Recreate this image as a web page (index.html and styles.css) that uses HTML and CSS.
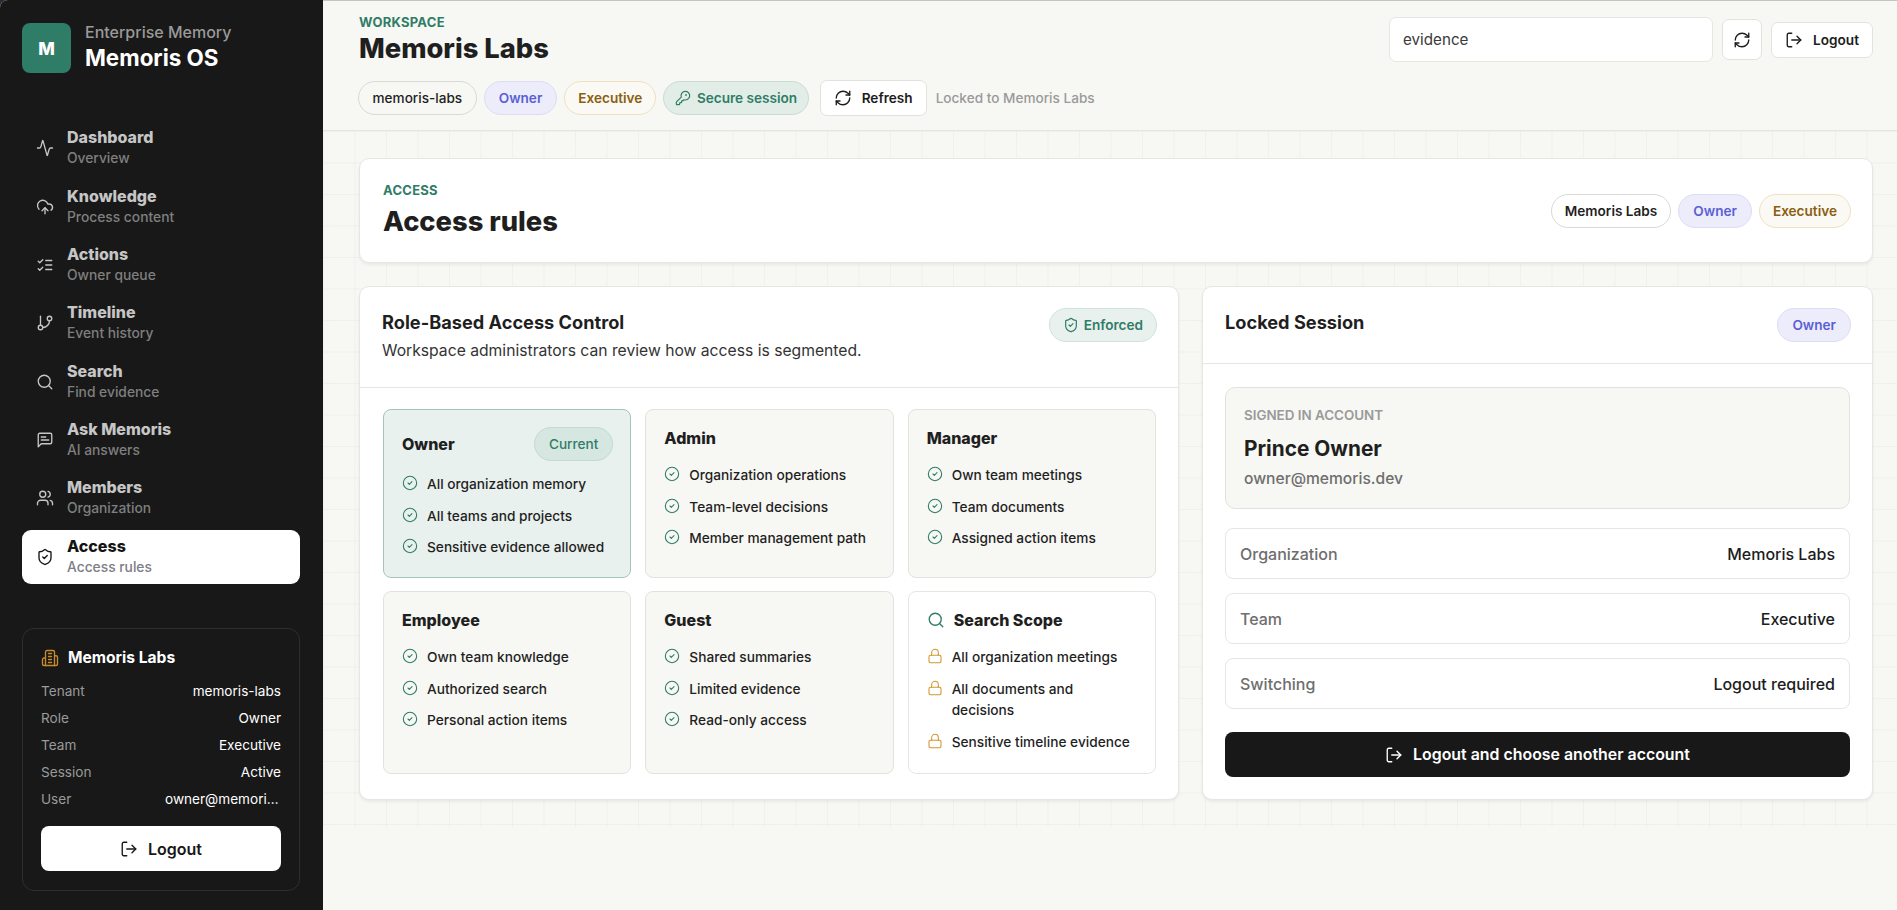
FILE: index.html
```html
<!DOCTYPE html>
<html lang="en">
<head>
    <meta charset="UTF-8">
    <meta name="viewport" content="width=device-width, initial-scale=1.0">
    <title>Memoris OS</title>
    <link rel="stylesheet" href="styles.css">
</head>
<body>
    <svg class="sprite" xmlns="http://www.w3.org/2000/svg">
        <symbol id="i-activity" viewBox="0 0 24 24"><path d="M22 12h-2.48a2 2 0 0 0-1.93 1.46l-2.35 8.36a.25.25 0 0 1-.48 0L9.24 2.18a.25.25 0 0 0-.48 0l-2.35 8.36A2 2 0 0 1 4.49 12H2"/></symbol>
        <symbol id="i-cloud" viewBox="0 0 24 24"><path d="M12 13v8"/><path d="M4 14.899A7 7 0 1 1 15.71 8h1.79a4.5 4.5 0 0 1 2.5 8.242"/><path d="m8 17 4-4 4 4"/></symbol>
        <symbol id="i-checks" viewBox="0 0 24 24"><path d="m3 17 2 2 4-4"/><path d="m3 7 2 2 4-4"/><path d="M13 6h8"/><path d="M13 12h8"/><path d="M13 18h8"/></symbol>
        <symbol id="i-branch" viewBox="0 0 24 24"><line x1="6" x2="6" y1="3" y2="15"/><circle cx="18" cy="6" r="3"/><circle cx="6" cy="18" r="3"/><path d="M18 9a9 9 0 0 1-9 9"/></symbol>
        <symbol id="i-search" viewBox="0 0 24 24"><circle cx="11" cy="11" r="8"/><path d="m21 21-4.3-4.3"/></symbol>
        <symbol id="i-message" viewBox="0 0 24 24"><path d="M21 15a2 2 0 0 1-2 2H7l-4 4V5a2 2 0 0 1 2-2h14a2 2 0 0 1 2 2z"/><path d="M13 8H7"/><path d="M17 12H7"/></symbol>
        <symbol id="i-users" viewBox="0 0 24 24"><path d="M16 21v-2a4 4 0 0 0-4-4H6a4 4 0 0 0-4 4v2"/><circle cx="9" cy="7" r="4"/><path d="M22 21v-2a4 4 0 0 0-3-3.87"/><path d="M16 3.13a4 4 0 0 1 0 7.75"/></symbol>
        <symbol id="i-shield" viewBox="0 0 24 24"><path d="M20 13c0 5-3.5 7.5-7.66 8.95a1 1 0 0 1-.67-.01C7.5 20.5 4 18 4 13V6a1 1 0 0 1 1-1c2 0 4.5-1.2 6.24-2.72a1.17 1.17 0 0 1 1.52 0C14.51 3.81 17 5 19 5a1 1 0 0 1 1 1z"/><path d="m9 12 2 2 4-4"/></symbol>
        <symbol id="i-building" viewBox="0 0 24 24"><path d="M6 22V4a2 2 0 0 1 2-2h8a2 2 0 0 1 2 2v18Z"/><path d="M6 12H4a2 2 0 0 0-2 2v6a2 2 0 0 0 2 2h2"/><path d="M18 9h2a2 2 0 0 1 2 2v9a2 2 0 0 1-2 2h-2"/><path d="M10 6h4"/><path d="M10 10h4"/><path d="M10 14h4"/><path d="M10 18h4"/></symbol>
        <symbol id="i-logout" viewBox="0 0 24 24"><path d="M9 21H5a2 2 0 0 1-2-2V5a2 2 0 0 1 2-2h4"/><polyline points="16 17 21 12 16 7"/><line x1="21" x2="9" y1="12" y2="12"/></symbol>
        <symbol id="i-refresh" viewBox="0 0 24 24"><path d="M3 12a9 9 0 0 1 9-9 9.75 9.75 0 0 1 6.74 2.74L21 8"/><path d="M21 3v5h-5"/><path d="M21 12a9 9 0 0 1-9 9 9.75 9.75 0 0 1-6.74-2.74L3 16"/><path d="M8 16H3v5"/></symbol>
        <symbol id="i-key" viewBox="0 0 24 24"><path d="M2.586 17.414A2 2 0 0 0 2 18.828V21a1 1 0 0 0 1 1h3a1 1 0 0 0 1-1v-1a1 1 0 0 1 1-1h1a1 1 0 0 0 1-1v-1a1 1 0 0 1 1-1h.172a2 2 0 0 0 1.414-.586l.814-.814a6.5 6.5 0 1 0-4-4z"/><circle cx="16.5" cy="7.5" r=".5"/></symbol>
        <symbol id="i-check" viewBox="0 0 24 24"><circle cx="12" cy="12" r="10"/><path d="m9 12 2 2 4-4"/></symbol>
        <symbol id="i-lock" viewBox="0 0 24 24"><rect width="18" height="11" x="3" y="11" rx="2" ry="2"/><path d="M7 11V7a5 5 0 0 1 10 0v4"/></symbol>
    </svg>

    <div class="app">
        <aside class="sidebar">
            <div class="brand">
                <div class="brand-mark">M</div>
                <div>
                    <div class="brand-sub">Enterprise Memory</div>
                    <div class="brand-name">Memoris OS</div>
                </div>
            </div>

            <nav class="nav">
                <a class="nav-item"><svg class="icon nav-icon"><use href="#i-activity"/></svg><span><b>Dashboard</b><small>Overview</small></span></a>
                <a class="nav-item"><svg class="icon nav-icon"><use href="#i-cloud"/></svg><span><b>Knowledge</b><small>Process content</small></span></a>
                <a class="nav-item"><svg class="icon nav-icon"><use href="#i-checks"/></svg><span><b>Actions</b><small>Owner queue</small></span></a>
                <a class="nav-item"><svg class="icon nav-icon"><use href="#i-branch"/></svg><span><b>Timeline</b><small>Event history</small></span></a>
                <a class="nav-item"><svg class="icon nav-icon"><use href="#i-search"/></svg><span><b>Search</b><small>Find evidence</small></span></a>
                <a class="nav-item"><svg class="icon nav-icon"><use href="#i-message"/></svg><span><b>Ask Memoris</b><small>AI answers</small></span></a>
                <a class="nav-item"><svg class="icon nav-icon"><use href="#i-users"/></svg><span><b>Members</b><small>Organization</small></span></a>
                <a class="nav-item active"><svg class="icon nav-icon"><use href="#i-shield"/></svg><span><b>Access</b><small>Access rules</small></span></a>
            </nav>

            <div class="org-card">
                <div class="org-title"><svg class="icon org-icon"><use href="#i-building"/></svg>Memoris Labs</div>
                <div class="org-row"><span>Tenant</span><em>memoris-labs</em></div>
                <div class="org-row"><span>Role</span><em>Owner</em></div>
                <div class="org-row"><span>Team</span><em>Executive</em></div>
                <div class="org-row"><span>Session</span><em>Active</em></div>
                <div class="org-row"><span>User</span><em class="clip">owner@memoris.dev</em></div>
                <button class="org-logout"><svg class="icon"><use href="#i-logout"/></svg>Logout</button>
            </div>
        </aside>

        <div class="main">
            <header class="topbar">
                <div>
                    <div class="eyebrow">Workspace</div>
                    <h1 class="top-title">Memoris Labs</h1>
                    <div class="chip-row">
                        <span class="chip tenant">memoris-labs</span>
                        <span class="chip owner">Owner</span>
                        <span class="chip exec">Executive</span>
                        <span class="chip secure"><svg class="icon small"><use href="#i-key"/></svg>Secure session</span>
                        <button class="btn refresh"><svg class="icon"><use href="#i-refresh"/></svg>Refresh</button>
                        <span class="locked">Locked to Memoris Labs</span>
                    </div>
                </div>
                <div class="top-actions">
                    <input class="search" type="text" value="evidence">
                    <button class="btn icon-btn"><svg class="icon"><use href="#i-refresh"/></svg></button>
                    <button class="btn top-logout"><svg class="icon"><use href="#i-logout"/></svg>Logout</button>
                </div>
            </header>

            <main class="content">
                <section class="page-head">
                    <div>
                        <div class="eyebrow">Access</div>
                        <h2 class="page-title">Access rules</h2>
                    </div>
                    <div class="head-chips">
                        <span class="chip plain">Memoris Labs</span>
                        <span class="chip owner">Owner</span>
                        <span class="chip exec">Executive</span>
                    </div>
                </section>

                <div class="columns">
                    <section class="panel">
                        <div class="panel-head tall">
                            <div>
                                <h3 class="panel-title">Role-Based Access Control</h3>
                                <p class="panel-sub">Workspace administrators can review how access is segmented.</p>
                            </div>
                            <span class="chip enforced"><svg class="icon small"><use href="#i-shield"/></svg>Enforced</span>
                        </div>
                        <div class="roles">
                            <div class="role current">
                                <div class="role-head"><h4>Owner</h4><span class="chip now">Current</span></div>
                                <ul>
                                    <li><svg class="icon tick"><use href="#i-check"/></svg>All organization memory</li>
                                    <li><svg class="icon tick"><use href="#i-check"/></svg>All teams and projects</li>
                                    <li><svg class="icon tick"><use href="#i-check"/></svg>Sensitive evidence allowed</li>
                                </ul>
                            </div>
                            <div class="role">
                                <div class="role-head"><h4>Admin</h4></div>
                                <ul>
                                    <li><svg class="icon tick"><use href="#i-check"/></svg>Organization operations</li>
                                    <li><svg class="icon tick"><use href="#i-check"/></svg>Team-level decisions</li>
                                    <li><svg class="icon tick"><use href="#i-check"/></svg>Member management path</li>
                                </ul>
                            </div>
                            <div class="role">
                                <div class="role-head"><h4>Manager</h4></div>
                                <ul>
                                    <li><svg class="icon tick"><use href="#i-check"/></svg>Own team meetings</li>
                                    <li><svg class="icon tick"><use href="#i-check"/></svg>Team documents</li>
                                    <li><svg class="icon tick"><use href="#i-check"/></svg>Assigned action items</li>
                                </ul>
                            </div>
                            <div class="role">
                                <div class="role-head"><h4>Employee</h4></div>
                                <ul>
                                    <li><svg class="icon tick"><use href="#i-check"/></svg>Own team knowledge</li>
                                    <li><svg class="icon tick"><use href="#i-check"/></svg>Authorized search</li>
                                    <li><svg class="icon tick"><use href="#i-check"/></svg>Personal action items</li>
                                </ul>
                            </div>
                            <div class="role">
                                <div class="role-head"><h4>Guest</h4></div>
                                <ul>
                                    <li><svg class="icon tick"><use href="#i-check"/></svg>Shared summaries</li>
                                    <li><svg class="icon tick"><use href="#i-check"/></svg>Limited evidence</li>
                                    <li><svg class="icon tick"><use href="#i-check"/></svg>Read-only access</li>
                                </ul>
                            </div>
                            <div class="role scope">
                                <div class="role-head start"><svg class="icon scope-icon"><use href="#i-search"/></svg><h4>Search Scope</h4></div>
                                <ul>
                                    <li><svg class="icon padlock"><use href="#i-lock"/></svg>All organization meetings</li>
                                    <li><svg class="icon padlock"><use href="#i-lock"/></svg>All documents and decisions</li>
                                    <li><svg class="icon padlock"><use href="#i-lock"/></svg>Sensitive timeline evidence</li>
                                </ul>
                            </div>
                        </div>
                    </section>

                    <section class="panel">
                        <div class="panel-head">
                            <h3 class="panel-title">Locked Session</h3>
                            <span class="chip owner soft">Owner</span>
                        </div>
                        <div class="session">
                            <div class="account">
                                <div class="account-label">Signed in account</div>
                                <div class="account-name">Prince Owner</div>
                                <div class="account-mail">owner@memoris.dev</div>
                            </div>
                            <div class="facts">
                                <div class="fact"><span>Organization</span><b>Memoris Labs</b></div>
                                <div class="fact"><span>Team</span><b>Executive</b></div>
                                <div class="fact"><span>Switching</span><b>Logout required</b></div>
                            </div>
                            <button class="switch-btn"><svg class="icon"><use href="#i-logout"/></svg>Logout and choose another account</button>
                        </div>
                    </section>
                </div>
            </main>
        </div>
    </div>
</body>
</html>
```

FILE: styles.css
```css
*{
    box-sizing: border-box;
}

html{
    height: 910px;
    overflow: hidden;
    background-color: #2a2c38;
}

body{
    margin: 0;
    height: 910px;
    overflow: hidden;
    font-family: Inter, "Noto Sans", sans-serif;
    color: #1c1c1c;
}

.sprite{
    display: none;
}

.icon{
    width: 18px;
    height: 18px;
    flex: none;
    fill: none;
    stroke: currentColor;
    stroke-width: 1.8;
    stroke-linecap: round;
    stroke-linejoin: round;
}

.icon.small{
    width: 16px;
    height: 16px;
}

.app{
    display: grid;
    grid-template-columns: 323px 1fr;
    height: 910px;
    background-color: #f7f7f3;
    border-top-left-radius: 8px;
    overflow: hidden;
}

/* sidebar */

.sidebar{
    display: flex;
    flex-direction: column;
    background-color: #181818;
    padding: 23px 23px 19px 22px;
}

.brand{
    display: flex;
    align-items: center;
    gap: 14px;
}

.brand-mark{
    width: 49px;
    height: 50px;
    border-radius: 8px;
    background-color: #2f7d67;
    color: white;
    font-size: 17.6px;
    font-weight: 800;
    display: flex;
    align-items: center;
    justify-content: center;
}

.brand-sub{
    font-size: 16px;
    font-weight: 500;
    line-height: 19px;
    color: #9a9a9a;
}

.brand-name{
    font-size: 22.4px;
    font-weight: 700;
    line-height: 31px;
    color: white;
}

.nav{
    display: flex;
    flex-direction: column;
    gap: 4px;
    margin-top: 48px;
}

.nav-item{
    display: flex;
    align-items: center;
    gap: 13px;
    padding: 7.2px 14px;
    border-radius: 9px;
    color: #c6c6c6;
}

.nav-item b{
    display: block;
    font-size: 16px;
    font-weight: 800;
    line-height: 18px;
}

.nav-item small{
    display: block;
    margin-top: 2px;
    font-size: 13.8px;
    font-weight: 500;
    line-height: 20px;
    color: #7f7f7f;
}

.nav-item.active{
    background-color: white;
    color: #141414;
}

.nav-item.active small{
    color: #7d7d85;
}

.org-card{
    margin-top: auto;
    height: 263px;
    padding: 18px;
    border: 1px solid #2e2e2e;
    border-radius: 12px;
}

.org-title{
    display: flex;
    align-items: center;
    gap: 9px;
    margin-bottom: 12px;
    font-size: 15.6px;
    font-weight: 700;
    line-height: 22px;
    color: white;
}

.org-icon{
    color: #c98a2b;
}

.org-row{
    display: flex;
    justify-content: space-between;
    font-size: 13.6px;
    line-height: 21px;
    margin-bottom: 6px;
    color: #9a9a9a;
}

.org-row em{
    font-style: normal;
    font-weight: 400;
    color: white;
}

.org-row em.clip{
    width: 116px;
    overflow: hidden;
    white-space: nowrap;
    text-overflow: ellipsis;
}

.org-logout{
    width: 100%;
    height: 45px;
    margin-top: 16px;
    display: flex;
    align-items: center;
    justify-content: center;
    gap: 10px;
    border: none;
    border-radius: 8px;
    background-color: white;
    color: #181818;
    font-family: inherit;
    font-size: 16px;
    font-weight: 600;
}

/* topbar */

.main{
    display: flex;
    flex-direction: column;
    min-width: 0;
    border-top: 1px solid #c4c4c4;
}

.topbar{
    display: flex;
    justify-content: space-between;
    height: 130px;
    padding: 13px 24px 0 36px;
    border-bottom: 1px solid #e4e4e0;
}

.eyebrow{
    font-size: 13px;
    font-weight: 700;
    line-height: 16px;
    letter-spacing: 0.02em;
    text-transform: uppercase;
    color: #2f7d67;
}

.top-title{
    margin: 2px 0 0;
    font-size: 27.3px;
    font-weight: 800;
    line-height: 34px;
    color: #1f1f1f;
}

.chip-row{
    display: flex;
    align-items: center;
    gap: 7px;
    margin: 14px 0 0 -1px;
}

.chip{
    display: inline-flex;
    align-items: center;
    gap: 6px;
    height: 34px;
    padding: 0 13px;
    border: 1px solid #d9d9d5;
    border-radius: 999px;
    font-size: 13.6px;
    font-weight: 500;
    color: #1f1f1f;
    white-space: nowrap;
}

.chip.tenant{
    padding: 0 13.5px;
}

.chip.plain{
    background-color: white;
    font-weight: 600;
}

.chip.owner{
    padding: 0 14px;
    background-color: #edecfb;
    border-color: #dddcf6;
    color: #5a5fd6;
    font-weight: 600;
}

.chip.exec{
    background-color: #fbf9f4;
    border-color: #f0e0c2;
    color: #8a5f12;
    font-weight: 600;
}

.chip.secure{
    padding: 0 10.5px;
    background-color: #e3ede8;
    border-color: #cadcd4;
    color: #2f7d67;
    font-weight: 600;
}

.chip.enforced{
    gap: 5px;
    background-color: #e9f1ee;
    border-color: #d0e2db;
    color: #2f7d67;
    font-weight: 600;
}

.chip.now{
    background-color: #d6e6e0;
    border-color: #c3dad1;
    color: #2f7d67;
    padding: 0 14px;
}

.btn{
    display: inline-flex;
    align-items: center;
    justify-content: center;
    border: 1px solid #e2e2de;
    border-radius: 7px;
    background-color: white;
    color: #1c1c1c;
    font-family: inherit;
    font-size: 13.6px;
    font-weight: 600;
}

.btn.refresh{
    height: 36px;
    gap: 10px;
    padding: 0 13px;
    margin-left: 4px;
}

.locked{
    margin-left: 2px;
    font-size: 13.6px;
    font-weight: 500;
    color: #9a9a9a;
}

.top-actions{
    display: flex;
    align-items: center;
    gap: 9px;
    height: 45px;
    margin-top: 3px;
}

.search{
    width: 324px;
    height: 45px;
    padding: 0 13px;
    border: 1px solid #e6e6e2;
    border-radius: 7px;
    background-color: white;
    color: #3a3a3a;
    font-family: inherit;
    font-size: 15.2px;
    outline: none;
}

.icon-btn{
    width: 40px;
    height: 41px;
}

.top-logout{
    height: 36px;
    width: 102px;
    gap: 10px;
    margin-top: 1px;
}

/* content */

.content{
    padding: 27px 24px 27px 36px;
    background-color: #f7f7f3;
    background-image:
        linear-gradient(rgba(24, 24, 24, 0.03) 1px, transparent 1px),
        linear-gradient(90deg, rgba(24, 24, 24, 0.03) 1px, transparent 1px);
    background-size: 31.5px 31.5px;
}

.page-head{
    display: flex;
    align-items: center;
    justify-content: space-between;
    height: 105px;
    padding: 0 21px 0 23px;
    background-color: white;
    border: 1px solid #e6e6e2;
    border-radius: 10px;
    box-shadow: 0 2px 3px rgba(0, 0, 0, 0.06);
}

.page-title{
    margin: 7px 0 0;
    font-size: 27.3px;
    font-weight: 800;
    line-height: 34px;
    color: #1f1f1f;
}

.head-chips{
    display: flex;
    gap: 7px;
}

.columns{
    display: grid;
    grid-template-columns: 820px 671px;
    gap: 23px;
    margin-top: 23px;
}

.panel{
    background-color: white;
    border: 1px solid #e6e6e2;
    border-radius: 10px;
    box-shadow: 0 2px 3px rgba(0, 0, 0, 0.06);
}

.panel-head{
    display: flex;
    justify-content: space-between;
    align-items: flex-start;
    height: 77px;
    padding: 21px 21px 0 22px;
    border-bottom: 1px solid #e6e6e2;
}

.panel-head.tall{
    height: 101px;
}

.panel-title{
    margin: 0;
    font-size: 18.2px;
    font-weight: 700;
    line-height: 29px;
    color: #1f1f1f;
}

.panel-sub{
    margin: 1px 0 0;
    font-size: 15.7px;
    line-height: 26px;
    color: #333;
}

.roles{
    display: grid;
    grid-template-columns: repeat(3, 1fr);
    gap: 13.5px 14px;
    padding: 21px 22px 24px 23px;
}

.role{
    padding: 17px 18px 19px;
    background-color: #f7f7f3;
    border: 1px solid #e2e2de;
    border-radius: 8px;
}

.role.current{
    padding-bottom: 18px;
    background-color: #e9f1ee;
    border-color: #a3c6b9;
}

.role.scope{
    background-color: white;
    border-color: #e6e6e2;
}

.role-head{
    display: flex;
    align-items: center;
    justify-content: space-between;
    margin-bottom: 16px;
}

.role.current .role-head{
    margin: 0 -1px 13px 0;
}

.role-head.start{
    justify-content: flex-start;
    gap: 9px;
}

.role-head h4{
    margin: 0;
    font-size: 16px;
    font-weight: 800;
    line-height: 22px;
    color: #1f1f1f;
}

.scope-icon{
    color: #2f7d67;
}

.role ul{
    margin: 0;
    padding: 0;
    list-style: none;
    display: flex;
    flex-direction: column;
    gap: 10px;
}

.role li{
    display: flex;
    align-items: flex-start;
    gap: 9px;
    font-size: 13.7px;
    font-weight: 500;
    line-height: 21.6px;
    color: #1f1f1f;
}

.tick,
.padlock{
    width: 16px;
    height: 16px;
    margin-top: 1px;
    stroke-width: 1.6;
}

.tick{
    color: #2f7d67;
}

.padlock{
    color: #cf982f;
}

/* session panel */

.session{
    padding: 23px 22px 22px;
}

.account{
    height: 122px;
    padding: 17px 18px;
    background-color: #f7f7f3;
    border: 1px solid #e2e2de;
    border-radius: 10px;
}

.account-label{
    font-size: 13.4px;
    font-weight: 600;
    line-height: 20px;
    text-transform: uppercase;
    color: #9a9a9a;
}

.account-name{
    margin-top: 9px;
    font-size: 20.8px;
    font-weight: 700;
    line-height: 30px;
    color: #1f1f1f;
}

.account-mail{
    margin-top: 4px;
    font-size: 15.6px;
    font-weight: 500;
    line-height: 22px;
    color: #6e6e6e;
}

.facts{
    display: flex;
    flex-direction: column;
    gap: 14px;
    margin-top: 19px;
}

.fact{
    display: flex;
    align-items: center;
    justify-content: space-between;
    height: 51px;
    padding: 0 14px;
    border: 1px solid #e6e6e2;
    border-radius: 8px;
    font-size: 16px;
}

.fact span{
    font-weight: 500;
    color: #6e6e6e;
}

.fact b{
    font-weight: 500;
    color: #1c1c1c;
}

.switch-btn{
    width: 100%;
    height: 45px;
    margin-top: 23px;
    display: flex;
    align-items: center;
    justify-content: center;
    gap: 10px;
    border: none;
    border-radius: 8px;
    background-color: #181818;
    color: white;
    font-family: inherit;
    font-size: 15.9px;
    font-weight: 600;
}
```
